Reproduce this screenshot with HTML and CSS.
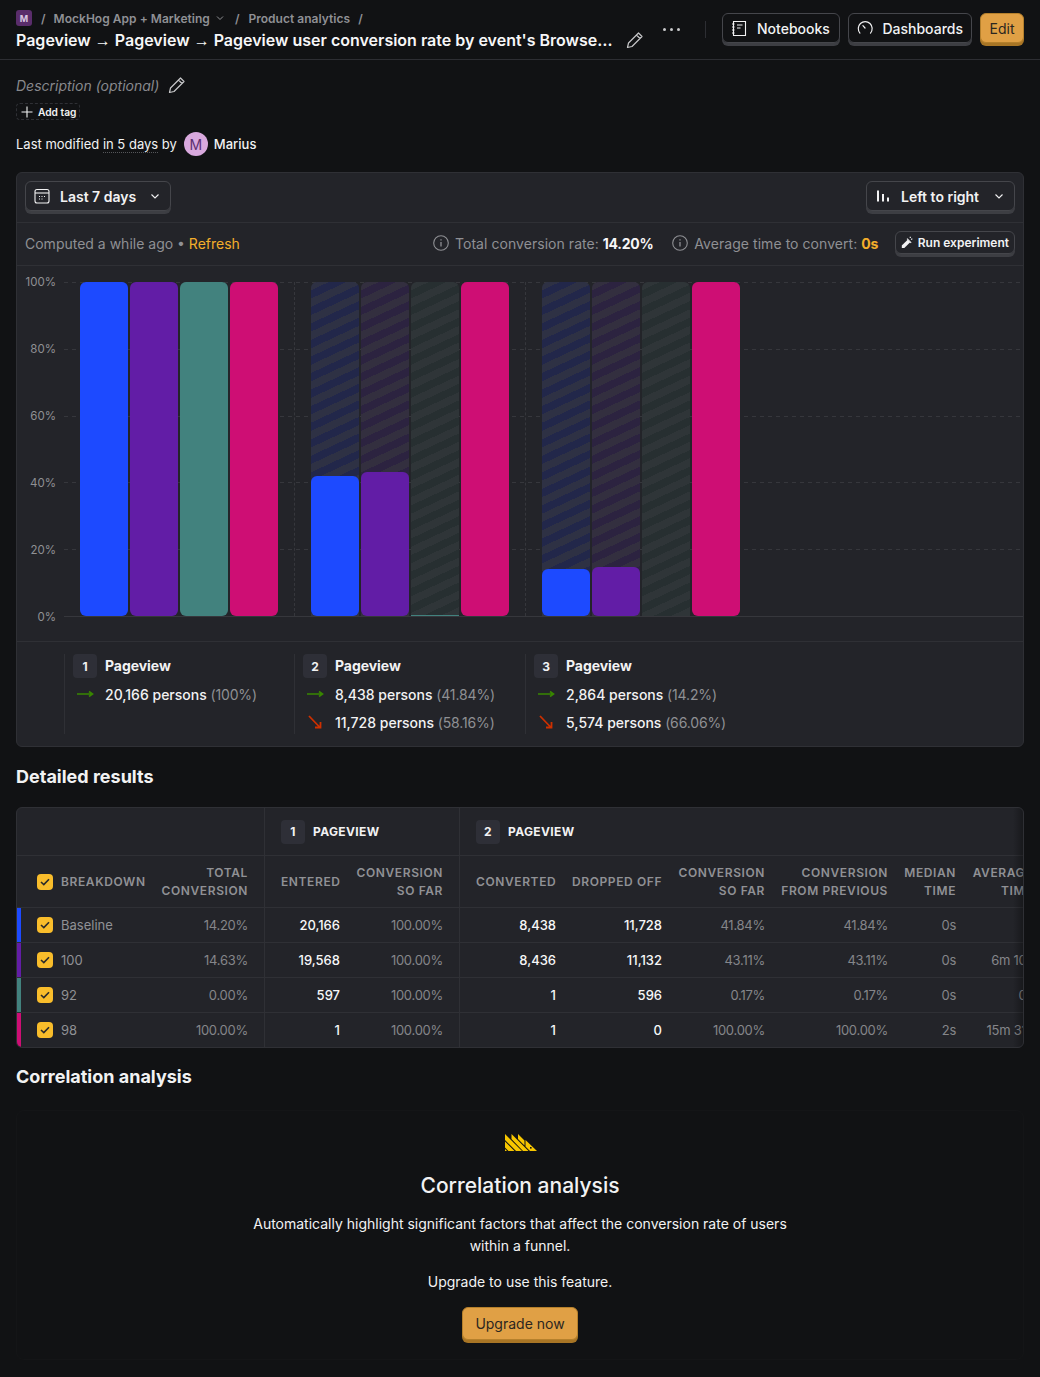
FILE: index.html
```html
<!DOCTYPE html>
<html>
  <head>
    <title>Pageview user conversion rate</title>
    <meta charset="utf-8">
    <link rel="stylesheet" href="styles.css">
  </head>
  <body>
    <header class="topbar">
      <div class="topbar-left">
        <div class="crumbs">
          <span class="project-badge">M</span>
          <span class="slash">/</span>
          <span>MockHog App + Marketing</span>
          <svg class="crumb-caret" width="8" height="8" viewBox="0 0 8 8"><path d="M1 2.5 4 5.5 7 2.5" fill="none" stroke="currentColor" stroke-width="1"/></svg>
          <span class="slash slash-wide">/</span>
          <span>Product analytics</span>
          <span class="slash slash-wide">/</span>
        </div>
        <div class="title-row">
          <h1 class="title">Pageview <span class="to">→</span> Pageview <span class="to">→</span> Pageview user conversion rate by event's Browser breakdown</h1>
          <svg class="pencil" width="18" height="18" viewBox="0 0 18 18"><path d="M1.5 16.5 2.5 12 12.5 2 16 5.5 6 15.5Z M10.5 4 14 7.5" fill="none" stroke="currentColor" stroke-width="1.2" stroke-linejoin="round"/></svg>
        </div>
      </div>
      <div class="dots"><i></i><i></i><i></i></div>
      <div class="topbar-sep"></div>
      <button class="btn btn-notebooks">
        <svg width="17" height="17" viewBox="0 0 17 17"><path d="M2.5 1.5H14.5V15.5H2.5Z M6 5H11.5 M6 8H9.5" fill="none" stroke="currentColor" stroke-width="1.1"/><path d="M1 4H3.5M1 7H3.5M1 10H3.5M1 13H3.5" stroke="currentColor" stroke-width="1"/></svg>
        Notebooks
      </button>
      <button class="btn btn-dash">
        <svg width="18" height="18" viewBox="0 0 18 18"><path d="M3.2 14.5A7.6 7.6 0 1 1 14.8 14.5 M6.5 6.5 8.8 9" fill="none" stroke="currentColor" stroke-width="1.3" stroke-linecap="round"/></svg>
        Dashboards
      </button>
      <button class="btn btn-primary btn-edit">Edit</button>
    </header>

    <main class="page">
      <div class="description">
        Description (optional)
        <svg class="pencil" width="18" height="18" viewBox="0 0 18 18"><path d="M1.5 16.5 2.5 12 12.5 2 16 5.5 6 15.5Z M10.5 4 14 7.5" fill="none" stroke="currentColor" stroke-width="1.2" stroke-linejoin="round"/></svg>
      </div>
      <div class="add-tag">
        <svg width="12" height="12" viewBox="0 0 12 12"><path d="M6 .5V11.5M.5 6H11.5" stroke="currentColor" stroke-width="1.1"/></svg>
        Add tag
      </div>
      <div class="modified">
        <span>Last modified <span class="dotted">in 5 days</span> by</span>
        <span class="avatar">M</span>
        <b>Marius</b>
      </div>

      <section class="card funnel">
        <div class="toolbar">
          <button class="btn btn-range">
            <svg width="16" height="16" viewBox="0 0 16 16"><rect x="1" y="1.5" width="14" height="13.5" rx="2" fill="none" stroke="currentColor" stroke-width="1.1"/><path d="M1 5H15" stroke="currentColor" stroke-width="1.1"/><path d="M5 8.5h1M7.5 8.5h1M10 8.5h1M5 11h1M7.5 11h1" stroke="currentColor" stroke-width="1"/></svg>
            <span>Last 7 days</span>
            <svg class="caret" width="10" height="10" viewBox="0 0 10 10"><path d="M1.5 3.5 5 7 8.5 3.5" fill="none" stroke="currentColor" stroke-width="1.1"/></svg>
          </button>
          <button class="btn btn-layout">
            <svg width="14" height="14" viewBox="0 0 14 14"><path d="M2 1.5V12.5M7 5V12.5M12 8.5V12.5" stroke="currentColor" stroke-width="2"/></svg>
            <span>Left to right</span>
            <svg class="caret" width="10" height="10" viewBox="0 0 10 10"><path d="M1.5 3.5 5 7 8.5 3.5" fill="none" stroke="currentColor" stroke-width="1.1"/></svg>
          </button>
        </div>

        <div class="stats">
          <div class="computed">Computed a while ago • <a class="refresh">Refresh</a></div>
          <div class="stat">
            <svg width="16" height="16" viewBox="0 0 16 16"><circle cx="8" cy="8" r="7.3" fill="none" stroke="currentColor" stroke-width="1.1"/><path d="M8 7V11.5M8 4.2V5.6" stroke="currentColor" stroke-width="1.3"/></svg>
            <span>Total conversion rate: <b>14.20%</b></span>
          </div>
          <div class="stat stat-time">
            <svg width="16" height="16" viewBox="0 0 16 16"><circle cx="8" cy="8" r="7.3" fill="none" stroke="currentColor" stroke-width="1.1"/><path d="M8 7V11.5M8 4.2V5.6" stroke="currentColor" stroke-width="1.3"/></svg>
            <span>Average time to convert: <b class="amber">0s</b></span>
          </div>
          <button class="btn btn-run">
            <svg width="13" height="13" viewBox="0 0 13 13"><path d="M.8 9.6 6.8 3.6 9.4 6.2 3.4 12.2H.8Z" fill="currentColor"/><path d="M6.2 2.6 10.4 6.8" stroke="currentColor" stroke-width="1.2"/><path d="M9.5 .5V2M11.5 2.5 10.5 3.5" stroke="currentColor" stroke-width="1.2"/></svg>
            Run experiment
          </button>
        </div>

        <div class="chart">
          <div class="y-axis">
            <span>100%</span><span>80%</span><span>60%</span><span>40%</span><span>20%</span><span>0%</span>
          </div>
          <div class="plot">
            <div class="gridlines"><i></i><i></i><i></i><i></i><i></i><i class="base"></i></div>
            <div class="steps">
              <div class="step">
                <div class="track"><div class="fill blue" style="height: 100%"></div></div>
                <div class="track"><div class="fill purple" style="height: 100%"></div></div>
                <div class="track"><div class="fill teal" style="height: 100%"></div></div>
                <div class="track"><div class="fill pink" style="height: 100%"></div></div>
              </div>
              <div class="step">
                <div class="track hatch-blue"><div class="fill blue" style="height: 41.84%"></div></div>
                <div class="track hatch-purple"><div class="fill purple" style="height: 43.11%"></div></div>
                <div class="track hatch-teal"><div class="fill teal tiny" style="height: 0.17%"></div></div>
                <div class="track"><div class="fill pink" style="height: 100%"></div></div>
              </div>
              <div class="step">
                <div class="track hatch-blue"><div class="fill blue" style="height: 14.2%"></div></div>
                <div class="track hatch-purple"><div class="fill purple" style="height: 14.63%"></div></div>
                <div class="track hatch-teal"></div>
                <div class="track"><div class="fill pink" style="height: 100%"></div></div>
              </div>
            </div>
          </div>
        </div>

        <div class="legend">
          <div class="legend-step">
            <div class="legend-head"><span class="num">1</span><b>Pageview</b></div>
            <div class="legend-row">
              <svg class="arrow" width="18" height="10" viewBox="0 0 18 10"><path d="M1 5H16M13 2.5 16.5 5 13 7.5" fill="none" stroke="#388600" stroke-width="1.6"/></svg>
              <span>20,166 persons <em>(100%)</em></span>
            </div>
          </div>
          <div class="legend-step">
            <div class="legend-head"><span class="num">2</span><b>Pageview</b></div>
            <div class="legend-row">
              <svg class="arrow" width="18" height="10" viewBox="0 0 18 10"><path d="M1 5H16M13 2.5 16.5 5 13 7.5" fill="none" stroke="#388600" stroke-width="1.6"/></svg>
              <span>8,438 persons <em>(41.84%)</em></span>
            </div>
            <div class="legend-row">
              <svg class="arrow" width="18" height="14" viewBox="0 0 18 14"><path d="M3 1 14 12.5M14.5 7V12.5H9" fill="none" stroke="#cd3000" stroke-width="1.8"/></svg>
              <span>11,728 persons <em>(58.16%)</em></span>
            </div>
          </div>
          <div class="legend-step">
            <div class="legend-head"><span class="num">3</span><b>Pageview</b></div>
            <div class="legend-row">
              <svg class="arrow" width="18" height="10" viewBox="0 0 18 10"><path d="M1 5H16M13 2.5 16.5 5 13 7.5" fill="none" stroke="#388600" stroke-width="1.6"/></svg>
              <span>2,864 persons <em>(14.2%)</em></span>
            </div>
            <div class="legend-row">
              <svg class="arrow" width="18" height="14" viewBox="0 0 18 14"><path d="M3 1 14 12.5M14.5 7V12.5H9" fill="none" stroke="#cd3000" stroke-width="1.8"/></svg>
              <span>5,574 persons <em>(66.06%)</em></span>
            </div>
          </div>
        </div>
      </section>

      <h2 class="heading">Detailed results</h2>

      <section class="card results">
        <table>
          <colgroup>
            <col class="c-strip"><col class="c-break"><col class="c-total"><col class="c-entered"><col class="c-sofar1">
            <col class="c-conv"><col class="c-drop"><col class="c-sofar2"><col class="c-prev"><col class="c-median"><col class="c-avg">
          </colgroup>
          <thead>
            <tr class="group-row">
              <th colspan="3" class="edge"></th>
              <th colspan="2" class="edge"><div class="group-name"><span class="num">1</span>Pageview</div></th>
              <th colspan="6"><div class="group-name"><span class="num">2</span>Pageview</div></th>
            </tr>
            <tr class="col-row">
              <th colspan="2"><div class="check-cell"><span class="check"><svg width="10" height="8" viewBox="0 0 10 8"><path d="M1 4 3.8 6.6 9 1.2" fill="none" stroke="#2b2b2b" stroke-width="1.6"/></svg></span>Breakdown</div></th>
              <th class="edge">Total<br>conversion</th>
              <th class="open">Entered</th>
              <th class="edge">Conversion<br>so far</th>
              <th class="open">Converted</th>
              <th>Dropped off</th>
              <th>Conversion<br>so far</th>
              <th>Conversion<br>from previous</th>
              <th>Median<br>time</th>
              <th>Average<br>time</th>
            </tr>
          </thead>
          <tbody>
            <tr>
              <td class="strip blue"></td>
              <td class="label"><div class="check-cell"><span class="check"><svg width="10" height="8" viewBox="0 0 10 8"><path d="M1 4 3.8 6.6 9 1.2" fill="none" stroke="#2b2b2b" stroke-width="1.6"/></svg></span>Baseline</div></td>
              <td class="edge muted">14.20%</td>
              <td class="strong">20,166</td>
              <td class="edge muted">100.00%</td>
              <td class="strong">8,438</td>
              <td class="strong">11,728</td>
              <td class="muted">41.84%</td>
              <td class="muted">41.84%</td>
              <td class="muted">0s</td>
              <td class="muted"></td>
            </tr>
            <tr>
              <td class="strip purple"></td>
              <td class="label"><div class="check-cell"><span class="check"><svg width="10" height="8" viewBox="0 0 10 8"><path d="M1 4 3.8 6.6 9 1.2" fill="none" stroke="#2b2b2b" stroke-width="1.6"/></svg></span>100</div></td>
              <td class="edge muted">14.63%</td>
              <td class="strong">19,568</td>
              <td class="edge muted">100.00%</td>
              <td class="strong">8,436</td>
              <td class="strong">11,132</td>
              <td class="muted">43.11%</td>
              <td class="muted">43.11%</td>
              <td class="muted">0s</td>
              <td class="muted">6m 10s</td>
            </tr>
            <tr>
              <td class="strip teal"></td>
              <td class="label"><div class="check-cell"><span class="check"><svg width="10" height="8" viewBox="0 0 10 8"><path d="M1 4 3.8 6.6 9 1.2" fill="none" stroke="#2b2b2b" stroke-width="1.6"/></svg></span>92</div></td>
              <td class="edge muted">0.00%</td>
              <td class="strong">597</td>
              <td class="edge muted">100.00%</td>
              <td class="strong">1</td>
              <td class="strong">596</td>
              <td class="muted">0.17%</td>
              <td class="muted">0.17%</td>
              <td class="muted">0s</td>
              <td class="muted">0s</td>
            </tr>
            <tr>
              <td class="strip pink"></td>
              <td class="label"><div class="check-cell"><span class="check"><svg width="10" height="8" viewBox="0 0 10 8"><path d="M1 4 3.8 6.6 9 1.2" fill="none" stroke="#2b2b2b" stroke-width="1.6"/></svg></span>98</div></td>
              <td class="edge muted">100.00%</td>
              <td class="strong">1</td>
              <td class="edge muted">100.00%</td>
              <td class="strong">1</td>
              <td class="strong">0</td>
              <td class="muted">100.00%</td>
              <td class="muted">100.00%</td>
              <td class="muted">2s</td>
              <td class="muted">15m 31s</td>
            </tr>
          </tbody>
        </table>
      </section>

      <h2 class="heading heading-corr">Correlation analysis</h2>

      <section class="upsell">
        <svg class="hog" width="32" height="17" viewBox="0 0 32 17">
          <path d="M0 0 17 17H11L0 6Z M0 7.5 9.5 17H3.5L0 13.5Z M0 15 2 17H0Z M6.5 0 23.5 17H18L6.5 5Z M13 0 19.5 6.5V11.5L13 5Z M20.5 6 32 17H25L20.5 12.5Z" fill="#f7c600"/>
          <rect x="25" y="13" width="1.6" height="1.6" fill="#111214"/>
        </svg>
        <h3>Correlation analysis</h3>
        <p>Automatically highlight significant factors that affect the conversion rate of users within a funnel.</p>
        <p class="upgrade-note">Upgrade to use this feature.</p>
        <button class="btn btn-primary btn-upgrade">Upgrade now</button>
      </section>
    </main>
  </body>
</html>
```
FILE: styles.css
```css
* {
  box-sizing: border-box;
}
body {
  margin: 0;
  background: #111214;
  color: #f2f2f3;
  font-family: Inter, "Noto Sans", sans-serif;
  font-size: 14px;
  overflow-x: hidden;
}
button {
  font-family: inherit;
}

/* top bar */
.topbar {
  display: flex;
  align-items: flex-start;
  height: 60px;
  padding: 13px 16px 0;
  border-bottom: 1px solid #2d2e33;
}
.topbar-left {
  width: 640px;
}
.crumbs {
  display: flex;
  align-items: center;
  height: 16px;
  margin-top: -3px;
  font-size: 12px;
  font-weight: 600;
  letter-spacing: 0.03px;
  color: #8f9094;
}
.project-badge {
  display: flex;
  align-items: center;
  justify-content: center;
  width: 16px;
  height: 16px;
  border-radius: 3px;
  background: #5a2d6b;
  color: #d9c6e0;
  font-size: 9px;
  font-weight: 700;
}
.slash {
  margin: 0 8px 0 9px;
}
.slash-wide {
  margin: 0 9px 0 8px;
}
.crumb-caret {
  margin-left: 6px;
  margin-right: 3px;
}
.title-row {
  display: flex;
  align-items: center;
  height: 24px;
  margin-top: 2px;
}
.title {
  width: 598px;
  margin: 0;
  overflow: hidden;
  font-size: 16px;
  font-weight: 600;
  color: #f7f7f8;
  white-space: nowrap;
  text-overflow: ellipsis;
}
.to {
  font-family: "Liberation Sans", sans-serif;
  font-weight: 400;
}
.pencil {
  flex: none;
  color: #c7c7c9;
}
.title-row .pencil {
  margin-left: 12px;
}
.dots {
  display: flex;
  gap: 4px;
  margin: 15px 0 0 7px;
}
.dots i {
  width: 3px;
  height: 3px;
  border-radius: 50%;
  background: #c9c9cb;
}
.topbar-sep {
  width: 1px;
  height: 17px;
  margin: 8px 16px 0 25px;
  background: #2d2e33;
}

/* buttons have a small lip under the face */
.btn {
  display: flex;
  align-items: center;
  height: 30px;
  padding: 0 8px;
  border: 1px solid #45464b;
  border-radius: 6px;
  background: transparent;
  box-shadow: 0 3px 0 -1px #3d3e43, 0 3px 0 0 #3d3e43;
  color: #f2f2f3;
  font-size: 14px;
  font-weight: 500;
}
.btn-notebooks {
  width: 118px;
  gap: 9px;
}
.btn-dash {
  width: 124px;
  gap: 9px;
  margin-left: 8px;
}
.btn-primary {
  justify-content: center;
  border-color: #b5802c;
  background: #e0a045;
  box-shadow: 0 3px 0 0 #a87525;
  color: #2b2620;
  font-weight: 400;
}
.btn-edit {
  width: 44px;
  margin-left: 8px;
}

/* page */
.page {
  padding: 0 16px;
}
.description {
  display: flex;
  align-items: center;
  gap: 9px;
  height: 20px;
  margin-top: 15px;
  font-size: 14px;
  font-style: italic;
  color: #88898d;
}
.add-tag {
  display: flex;
  align-items: center;
  gap: 5px;
  width: 64px;
  height: 17px;
  margin-top: 8px;
  padding-left: 4px;
  border: 1px dashed #2f3035;
  border-radius: 4px;
  font-size: 10.2px;
  font-weight: 600;
  white-space: nowrap;
}
.modified {
  display: flex;
  align-items: center;
  height: 24px;
  margin-top: 12px;
  font-size: 13px;
}
.dotted {
  border-bottom: 1px dotted #55565a;
}
.avatar {
  display: flex;
  align-items: center;
  justify-content: center;
  width: 24px;
  height: 24px;
  margin: 0 6px 0 7px;
  border-radius: 50%;
  background: #d9a9de;
  color: #5d2f70;
  font-size: 14px;
}
.modified b {
  font-weight: 500;
}

/* cards */
.card {
  border: 1px solid #2f3035;
  border-radius: 6px;
  background: #232429;
}
.funnel {
  margin-top: 16px;
}
.toolbar {
  display: flex;
  justify-content: space-between;
  height: 50px;
  padding: 8px 8px 0;
  border-bottom: 1px solid #2f3035;
}
.btn-range {
  width: 146px;
  gap: 10px;
  font-weight: 600;
}
.btn-layout {
  width: 149px;
  gap: 11px;
  padding-left: 9px;
  font-weight: 600;
}
.btn-range .caret,
.btn-layout .caret {
  margin-left: auto;
  margin-right: 2px;
}
.stats {
  display: flex;
  align-items: center;
  height: 43px;
  padding: 0 8px 2px;
  border-bottom: 1px solid #2f3035;
  color: #8f9094;
}
.computed {
  flex: 1;
}
.refresh {
  color: #f3ae2b;
}
.stat {
  display: flex;
  align-items: center;
  gap: 6px;
  letter-spacing: 0.05px;
}
.stat b {
  font-weight: 700;
  letter-spacing: -0.02em;
  color: #f7f7f8;
}
.stat b.amber {
  color: #f3ae2b;
}
.stat-time {
  margin-left: 19px;
}
.btn-run {
  gap: 4px;
  width: 120px;
  height: 23px;
  margin-left: 17px;
  margin-top: -2px;
  padding: 0 5px;
  font-size: 12px;
  font-weight: 600;
  white-space: nowrap;
}

/* chart */
.chart {
  display: flex;
  height: 376px;
  padding: 16px 0 24px;
  border-bottom: 1px solid #2f3035;
}
.y-axis {
  display: flex;
  flex: none;
  flex-direction: column;
  justify-content: space-between;
  align-items: flex-end;
  width: 47px;
  padding-right: 8px;
  margin: -7px 0;
  font-size: 11.5px;
  line-height: 14px;
  color: #8f9094;
}
.plot {
  position: relative;
  flex: 1;
}
.gridlines {
  position: absolute;
  top: 0;
  right: 0;
  bottom: 0;
  left: 0;
  display: flex;
  flex-direction: column;
  justify-content: space-between;
}
.gridlines i {
  height: 1px;
  background: repeating-linear-gradient(90deg, #36373c 0 4px, transparent 4px 8px);
}
.gridlines i.base {
  background: #36373c;
}
.steps {
  position: relative;
  display: grid;
  grid-template-columns: repeat(3, 231px);
  height: calc(100% - 1px);
  margin-left: -1px;
}
.step {
  display: flex;
  gap: 2px;
  padding-left: 16px;
  border-left: 1px dashed #36373c;
}
.step:first-child {
  border-left-color: transparent;
}
.track {
  display: flex;
  align-items: flex-end;
  width: 48px;
  height: 100%;
  border-radius: 6px 6px 0 0;
}
.fill {
  width: 100%;
  border-radius: 6px;
}
.fill.tiny {
  min-height: 1px;
  border-radius: 0;
}
.blue {
  background: #1d4aff;
}
.purple {
  background: #621da6;
}
.teal {
  background: #42827e;
}
.pink {
  background: #ce0e74;
}
.hatch-blue {
  background: repeating-linear-gradient(155deg, #2e3144 0 7.5px, #22274a 7.5px 15px);
}
.hatch-purple {
  background: repeating-linear-gradient(155deg, #332f3f 0 7.5px, #2c2340 7.5px 15px);
}
.hatch-teal {
  background: repeating-linear-gradient(155deg, #2f3538 0 7.5px, #272f31 7.5px 15px);
}

/* legend under the chart */
.legend {
  display: grid;
  grid-template-columns: 230px 231px 231px;
  height: 104px;
  padding: 12px 0 0 47px;
}
.legend-step {
  height: 80px;
  padding-left: 8px;
  border-left: 1px solid #2f3035;
}
.legend-head {
  display: flex;
  align-items: center;
  gap: 8px;
  height: 24px;
  margin-bottom: 2px;
}
.legend-head b {
  margin-top: -2px;
  font-weight: 700;
  letter-spacing: -0.05px;
}
.num {
  display: flex;
  flex: none;
  align-items: center;
  justify-content: center;
  width: 24px;
  height: 24px;
  border-radius: 4px;
  background: #2e2f37;
  font-size: 12px;
  font-weight: 700;
}
.legend-row {
  display: flex;
  align-items: center;
  height: 28px;
  font-weight: 500;
}
.legend-row em {
  font-style: normal;
  font-weight: 400;
  letter-spacing: -0.01em;
  color: #8f9094;
}
.arrow {
  flex: none;
  margin-left: 3px;
  margin-right: 11px;
}

/* headings */
.heading {
  height: 24px;
  margin: 18px 0 0;
  font-size: 18px;
  font-weight: 700;
  line-height: 24px;
}
.results {
  position: relative;
  margin-top: 18px;
  overflow: hidden;
}
.results::after {
  content: "";
  position: absolute;
  top: 0;
  right: 0;
  bottom: 0;
  width: 10px;
  background: linear-gradient(90deg, transparent, rgba(0, 0, 0, 0.3));
}

/* results table */
table {
  width: 1024px;
  table-layout: fixed;
  border-collapse: separate;
  border-spacing: 0;
}
.c-strip { width: 4px; }
.c-break { width: 132px; }
.c-total { width: 112px; }
.c-entered { width: 83px; }
.c-sofar1 { width: 112px; }
.c-conv { width: 104px; }
.c-drop { width: 106px; }
.c-sofar2 { width: 103px; }
.c-prev { width: 123px; }
.c-median { width: 68px; }
.c-avg { width: 77px; }

th,
td {
  padding: 0 8px;
  border-bottom: 1px solid #2f3035;
  white-space: nowrap;
  text-align: right;
}
th.edge,
td.edge {
  padding-right: 16px;
  border-right: 1px solid #2f3035;
}
.group-row th {
  height: 48px;
  padding-left: 16px;
  text-align: left;
}
.group-name {
  display: flex;
  align-items: center;
  gap: 8px;
  font-size: 12px;
  font-weight: 700;
  letter-spacing: 0.03em;
  text-transform: uppercase;
}
.col-row th {
  height: 52px;
  font-size: 12px;
  font-weight: 600;
  letter-spacing: 0.05em;
  line-height: 18px;
  color: #909195;
  text-transform: uppercase;
}
.col-row th.open {
  padding-left: 16px;
  text-align: left;
}
.col-row th:first-child {
  padding-left: 20px;
  text-align: left;
}
td {
  height: 35px;
  font-size: 13px;
}
tbody tr:last-child td {
  height: 34px;
  border-bottom: 0;
}
td.strip {
  padding: 0;
}
td.label {
  padding-left: 16px;
  text-align: left;
  color: #909195;
}
.muted {
  letter-spacing: -0.02em;
  color: #85868a;
}
.strong {
  font-weight: 500;
  color: #f7f7f8;
}
.check-cell {
  display: flex;
  align-items: center;
  gap: 8px;
}
.check {
  display: flex;
  flex: none;
  align-items: center;
  justify-content: center;
  width: 16px;
  height: 16px;
  border-radius: 4px;
  background: #f9bd2b;
}

/* correlation upsell */
.heading-corr {
  margin-top: 17px;
}
.upsell {
  display: flex;
  flex-direction: column;
  align-items: center;
  height: 250px;
  margin-top: 21px;
  padding-top: 23px;
  border: 1px solid #141517;
  border-radius: 8px;
  text-align: center;
}
.hog {
  flex: none;
  margin-left: 2px;
}
.upsell h3 {
  margin: 21px 0 0;
  font-size: 21px;
  font-weight: 500;
  line-height: 28px;
}
.upsell p {
  width: 560px;
  margin: 13px 0 0;
  font-size: 14px;
  line-height: 22px;
}
.upsell .upgrade-note {
  margin-top: 14px;
}
.btn-upgrade {
  width: 116px;
  height: 33px;
  margin-top: 14px;
}
```
